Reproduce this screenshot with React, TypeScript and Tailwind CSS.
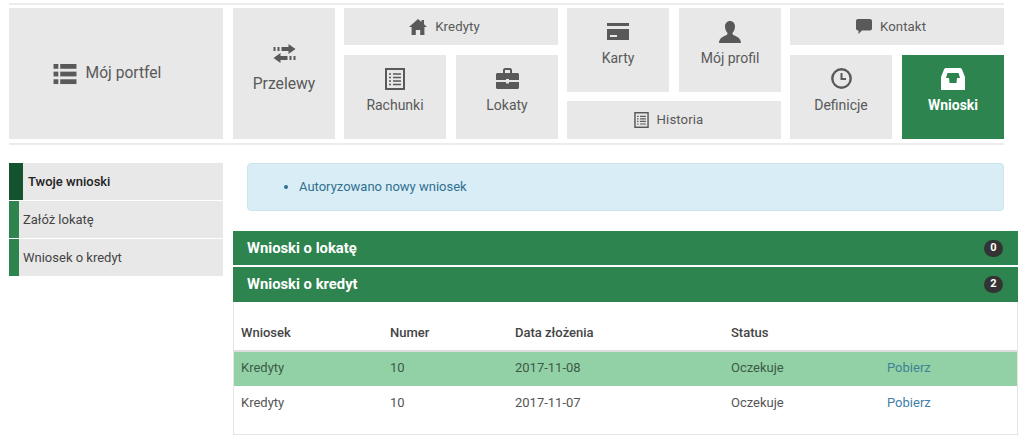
import React from "react";

const IconList = ({ className = "" }: { className?: string }) => (
  <svg viewBox="0 0 24 22" className={className} fill="currentColor">
    <rect x="0" y="0" width="5" height="5" /><rect x="7" y="0" width="17" height="5" />
    <rect x="0" y="8" width="5" height="5" /><rect x="7" y="8" width="17" height="5" />
    <rect x="0" y="16" width="5" height="5" /><rect x="7" y="16" width="17" height="5" />
  </svg>
);
const IconTransfer = ({ className = "" }: { className?: string }) => (
  <svg viewBox="0 0 22 19" className={className} fill="currentColor">
    <rect x="0" y="3" width="2" height="4" /><rect x="4" y="3" width="2" height="4" />
    <path d="M8 3h7V0l7 5-7 5V7H8z" />
    <rect x="20" y="12" width="2" height="4" /><rect x="16" y="12" width="2" height="4" />
    <path d="M14 12H7V9l-7 5 7 5v-3h7z" />
  </svg>
);
const IconHome = ({ className = "" }: { className?: string }) => (
  <svg viewBox="0 0 18 16" className={className} fill="currentColor">
    <path d="M9 0l3.500 3V1H15v4.200L18 8h-2.600v8h-4.200v-5H6.800v5H2.600V8H0z" />
  </svg>
);
const IconListAlt = ({ className = "" }: { className?: string }) => (
  <svg viewBox="0 0 20 22" className={className} fill="none" stroke="currentColor">
    <rect x="1" y="1" width="18" height="20" strokeWidth="2" />
    <g strokeWidth="1.600">
      <path d="M4 6h2M8 6h8M4 9.500h2M8 9.500h8M4 13h2M8 13h8M4 16.500h2M8 16.500h8" />
    </g>
  </svg>
);
const IconBriefcase = ({ className = "" }: { className?: string }) => (
  <svg viewBox="0 0 23 21" className={className} fill="currentColor">
    <path d="M7 5V2C7 1 8 0 9 0h5c1 0 2 1 2 2v3h5.500c.8 0 1.500.7 1.500 1.500V12H13v-1h-3v1H0V6.500C0 5.700.7 5 1.500 5zm2-3v3h5V2z" fillRule="evenodd" />
    <path d="M0 14h10v1.500h3V14h10v5.500c0 .8-.7 1.500-1.500 1.500h-20C.7 21 0 20.300 0 19.500z" />
  </svg>
);
const IconCard = ({ className = "" }: { className?: string }) => (
  <svg viewBox="0 0 22 17" className={className} fill="currentColor">
    <rect x="0" y="0" width="22" height="3" />
    <path d="M0 6h22v11H0zm3 6v2h7v-2z" fillRule="evenodd" />
  </svg>
);
const IconUser = ({ className = "" }: { className?: string }) => (
  <svg viewBox="0 0 22 22" className={className} fill="currentColor">
    <path d="M11 0c3 0 5 2.400 5 5.500 0 2.500-1 4.800-2.200 6-.5.600-.4 2 .6 2.600 2.600 1.400 7.600 2.900 7.600 7.900H0c0-5 5-6.500 7.600-7.900 1-.6 1.100-2 .6-2.600C7 10.300 6 8 6 5.500 6 2.400 8 0 11 0z" />
  </svg>
);
const IconComment = ({ className = "" }: { className?: string }) => (
  <svg viewBox="0 0 16 15" className={className} fill="currentColor">
    <path d="M2 0h12c1.100 0 2 .9 2 2v7.500c0 1.100-.9 2-2 2H6L2.500 15v-3.500H2c-1.100 0-2-.9-2-2V2C0 .9.900 0 2 0z" />
  </svg>
);
const IconClock = ({ className = "" }: { className?: string }) => (
  <svg viewBox="0 0 21 21" className={className} fill="none" stroke="currentColor">
    <circle cx="10.500" cy="10.500" r="9.200" strokeWidth="2.400" />
    <path d="M10.500 5v6h4.500" strokeWidth="2" />
  </svg>
);
const IconInbox = ({ className = "" }: { className?: string }) => (
  <svg viewBox="0 0 24 22" className={className} fill="currentColor">
    <path d="M5 0h14c1 0 1.500.5 2 1.500L24 9v13H0V9l3-7.500C3.500.5 4 0 5 0zm1.500 5L5 10h3l.5 5h7l.5-5h3l-1.500-5z" fillRule="evenodd" />
  </svg>
);

const base = "flex shrink-0 bg-[#e8e8e8] text-[#595959]";

function TallTile({ icon, label, active }: { icon: React.ReactNode; label: string; active?: boolean }) {
  return (
    <div className={`flex w-[102px] shrink-0 flex-col items-center pt-[12px] ${active ? "bg-[#2d844e] font-bold text-white" : "bg-[#e8e8e8] text-[#595959]"}`}>
      <div className="flex h-[23px] items-center">{icon}</div>
      <div className="mt-[5px] text-[14px] leading-[20px]">{label}</div>
    </div>
  );
}

function WideTile({ icon, label, h, pr }: { icon: React.ReactNode; label: string; h: string; pr: string }) {
  return (
    <div className={`${base} ${h} ${pr} w-[214px] items-center justify-center gap-[8px] text-[13.200px] tracking-[0.1px]`}>
      {icon}
      <span>{label}</span>
    </div>
  );
}

function SideItem({ label, active }: { label: string; active?: boolean }) {
  return (
    <div className="flex h-[37px] bg-[#e8e8e8]">
      <div className={active ? "w-[14px] bg-[#14532d]" : "w-[10px] bg-[#2d844e]"} />
      <div className={`text-[13px] leading-[38px] ${active ? "pl-[5px] font-medium text-[#222222]" : "pl-[4px] text-[#444444]"}`}>{label}</div>
    </div>
  );
}

function PanelHead({ label, count, h }: { label: string; count: number; h: string }) {
  return (
    <div className={`${h} flex items-center justify-between bg-[#2d844e] pl-[14px] pr-[15px] text-white`}>
      <span className="text-[14.800px] font-bold">{label}</span>
      <span className="flex h-[17px] w-[19px] items-center justify-center rounded-full bg-[#333333] text-[11px] font-bold">{count}</span>
    </div>
  );
}

const cols = ["w-[149px]", "w-[125px]", "w-[216px]", "w-[156px]", "flex-1"];

function Row({ date, highlight }: { date: string; highlight?: boolean }) {
  const cells = ["Kredyty", "10", date, "Oczekuje"];
  return (
    <div className={`flex h-[34px] items-center pl-[7px] text-[13px] ${highlight ? "bg-[#91d1a5] pb-[2px] text-[#3d5a47]" : "text-[#555555]"}`}>
      {cells.map((c, i) => (
        <div key={i} className={cols[i]}>{c}</div>
      ))}
      <div className={`${cols[4]} ${highlight ? "text-[#3f8295]" : "text-[#3f7fa8]"}`}>Pobierz</div>
    </div>
  );
}

export default function App() {
  return (
    <div className="h-[445px] w-[1024px] overflow-hidden bg-white pl-[9px] pt-[3px] font-['Roboto',sans-serif]">
      <div className="h-[142px] w-[995px] border-y-2 border-[#ececec] py-[3px]">
        <div className="flex h-[131px] gap-[9px]">
          <div className={`${base} mr-[1px] w-[214px] items-center justify-center gap-[9px] pr-[18px] pt-[1px] text-[15.600px]`}>
            <IconList className="h-[21px] w-[24px]" />
            <span>Mój portfel</span>
          </div>
          <div className={`${base} w-[102px] flex-col items-center justify-center pb-[7px] text-[15.700px]`}>
            <IconTransfer className="h-[19px] w-[23px]" />
            <span className="mt-[9px]">Przelewy</span>
          </div>
          <div className="flex w-[214px] shrink-0 flex-col gap-[10px]">
            <WideTile h="h-[37px]" pr="pr-[13px]" label="Kredyty" icon={<IconHome className="h-[16px] w-[18px]" />} />
            <div className="flex flex-1 gap-[10px]">
              <TallTile label="Rachunki" icon={<IconListAlt className="h-[22px] w-[20px]" />} />
              <TallTile label="Lokaty" icon={<IconBriefcase className="h-[21px] w-[23px]" />} />
            </div>
          </div>
          <div className="flex w-[214px] shrink-0 flex-col gap-[9px]">
            <div className="flex h-[84px] gap-[10px]">
              <TallTile label="Karty" icon={<IconCard className="h-[17px] w-[22px]" />} />
              <TallTile label="Mój profil" icon={<IconUser className="h-[22px] w-[22px]" />} />
            </div>
            <WideTile h="flex-1" pr="pr-[11px]" label="Historia" icon={<IconListAlt className="h-[16px] w-[15px]" />} />
          </div>
          <div className="flex w-[214px] shrink-0 flex-col gap-[10px]">
            <WideTile h="h-[37px]" pr="pr-[12px]" label="Kontakt" icon={<IconComment className="h-[15px] w-[16px]" />} />
            <div className="flex flex-1 gap-[10px]">
              <TallTile label="Definicje" icon={<IconClock className="h-[21px] w-[21px]" />} />
              <TallTile label="Wnioski" active icon={<IconInbox className="h-[22px] w-[24px]" />} />
            </div>
          </div>
        </div>
      </div>

      <div className="mt-[18px] flex gap-[10px]">
        <div className="flex w-[214px] flex-col gap-[1px] self-start">
          <SideItem label="Twoje wnioski" active />
          <SideItem label="Załóż lokatę" />
          <SideItem label="Wniosek o kredyt" />
        </div>
        <div className="w-[785px]">
          <div className="mx-[14px] flex h-[48px] rounded-[4px] border border-[#cde6ee] bg-[#d9edf7] pl-[36px] pt-[14px] text-[13px] leading-[18px] text-[#31708f]">
            <ul className="list-disc pl-[15px]">
              <li>Autoryzowano nowy wniosek</li>
            </ul>
          </div>
          <div className="mt-[20px]">
            <PanelHead label="Wnioski o lokatę" count={0} h="h-[34px]" />
            <div className="mt-[2px]">
              <PanelHead label="Wnioski o kredyt" count={2} h="h-[35px]" />
            </div>
            <div className="h-[133px] border-x border-b border-[#e4e4e4]">
              <div className="flex h-[50px] items-end border-b-2 border-[#dddddd] pb-[8px] pl-[7px] text-[13px] font-medium text-[#444444]">
                {["Wniosek", "Numer", "Data złożenia", "Status"].map((c, i) => (
                  <div key={c} className={cols[i]}>{c}</div>
                ))}
              </div>
              <Row date="2017-11-08" highlight />
              <Row date="2017-11-07" />
            </div>
          </div>
        </div>
      </div>
    </div>
  );
}
